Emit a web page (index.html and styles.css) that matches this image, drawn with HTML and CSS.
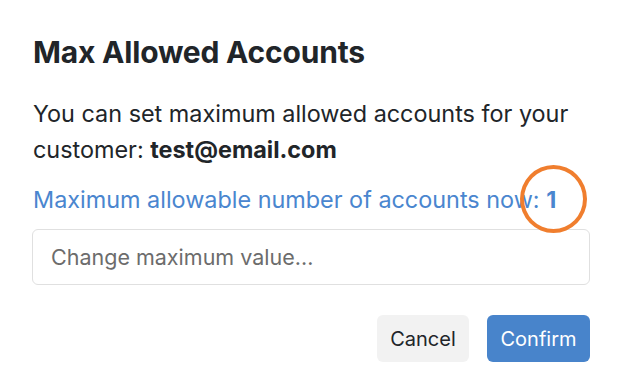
FILE: index.html
```html
<!DOCTYPE html>
<html>
<head>
<meta charset="utf-8">
<link rel="stylesheet" href="styles.css">
</head>
<body>
<div class="modal">
  <h2 class="title">Max Allowed Accounts</h2>
  <p class="desc">You can set maximum allowed accounts for your customer: <strong>test@email.com</strong></p>
  <p class="current">Maximum allowable number of accounts now: <strong class="count">1</strong></p>
  <input class="field" type="text" placeholder="Change maximum value...">
  <div class="actions">
    <button class="btn btn-cancel">Cancel</button>
    <button class="btn btn-confirm">Confirm</button>
  </div>
</div>
</body>
</html>
```
FILE: styles.css
```css
html, body {
  margin: 0;
  padding: 0;
  background: #ffffff;
}
body {
  font-family: Inter, "Liberation Sans", sans-serif;
  color: #212529;
}
.modal {
  width: 622px;
  height: 392px;
  box-sizing: border-box;
  padding: 30px 32px 0 33px;
  display: flex;
  flex-direction: column;
}
.title {
  margin: 0;
  font-size: 30px;
  font-weight: 700;
  line-height: 44px;
  letter-spacing: -0.2px;
}
.desc {
  margin: 22px 0 0;
  font-size: 23.4px;
  line-height: 36px;
}
.desc strong {
  font-weight: 700;
}
.current {
  margin: 14px 0 0;
  font-size: 23.4px;
  line-height: 36px;
  color: #4a86cf;
}
.count {
  position: relative;
  font-weight: 700;
}
.count::after {
  content: "";
  position: absolute;
  left: -26px;
  top: -20px;
  width: 59px;
  height: 60px;
  border: 4px solid #f07e2e;
  border-radius: 50%;
}
.field {
  margin: 11px 0 0 -1px;
  height: 56px;
  box-sizing: border-box;
  border: 1px solid #e0e0e0;
  border-radius: 6px;
  padding: 0 18px;
  font-family: Inter, "Liberation Sans", sans-serif;
  font-size: 21.5px;
  color: #212529;
  outline: none;
}
.field::placeholder {
  color: #6c6c6c;
}
.actions {
  display: flex;
  justify-content: flex-end;
  gap: 18px;
  margin-top: 30px;
}
.btn {
  height: 47px;
  border: none;
  border-radius: 6px;
  font-family: Inter, "Liberation Sans", sans-serif;
  font-size: 20px;
  padding: 0 13px;
}
.btn-cancel {
  background: #f2f2f2;
  color: #212529;
  width: 92px;
}
.btn-confirm {
  background: #4884cb;
  color: #ffffff;
  width: 103px;
}
```
